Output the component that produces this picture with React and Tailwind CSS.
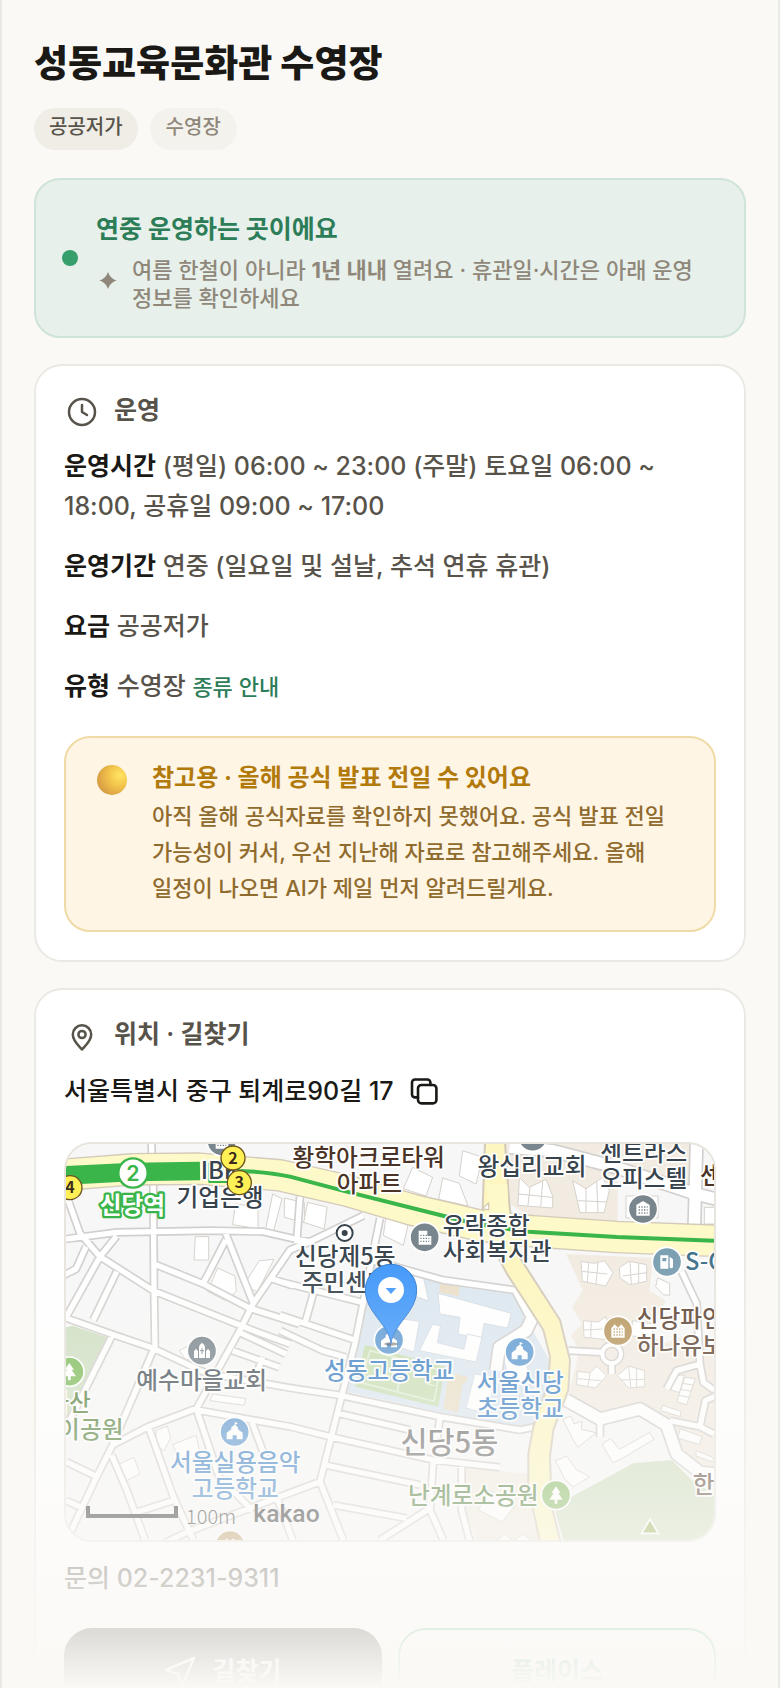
import React, { useState } from "react";
import { clsx } from "clsx";

const minorRoads = [
  "M256 -10L262 138L264 428L267 613",
  "M0 285L152 265L432 260L592 263L700 288L732 293L892 215",
  "M0 150L42 268L102 338L262 440L552 556L672 600",
  "M152 276L102 338L0 520",
  "M60 308L30 375L-10 395",
  "M270 362L412 420L552 493L700 540",
  "M479 268L562 478M479 288L412 418",
  "M732 293L672 318L562 478L522 558L392 793L247 848L140 903L92 998L12 1168",
  "M0 522L142 572L262 613L422 688L680 733L817 753L1122 818L1362 858L1420 846",
  "M152 383L82 528",
  "M137 578L2 848",
  "M262 618L140 900",
  "M392 798L672 848L792 878L1102 948L1302 970",
  "M942 223L867 598L762 1013L832 1188",
  "M762 1013L642 1058L362 1165L300 1195",
  "M777 963L1062 1023",
  "M1102 948L1092 1098L1132 1188",
  "M1187 968L1187 1098L1212 1195",
  "M802 1083L1022 1123M1092 1093L942 1188",
  "M817 808L1032 858M1122 818L1114 880",
  "M247 848L322 1058L382 1188",
  "M392 798L460 1000L560 1100",
  "M137 933L182 1038L237 1188",
  "M202 1108L327 1068M0 953L92 998M0 1070L50 1092",
  "M557 833L612 978M632 1058L680 1188",
  "M702 158L692 298",
  "M922 350L1130 408L1357 440",
  "M642 413L900 478M620 405L680 425M642 513L872 590M742 448L717 538",
  "M520 565L660 630M500 620L640 670M590 640L572 690",
  "M642 560L770 620L840 640",
  "M1847 383L1892 478L1902 660L1912 715L1944 738",
  "M1902 660L1832 680L1802 735",
  "M1812 830L1902 848L1918 770L1950 755M1902 848L1944 870",
  "M1507 620L1607 625M1637 655L1637 690M1602 830L1602 880",
];

const wideRoads = [
  "M1892 -10L1885 250",
  "M1330 10L1460 20L1650 70L1890 150L1950 165",
  "M1500 768L1602 825L1722 795L1802 843L1832 930L1902 985L1954 990",
  "M1357 440L1400 520L1380 560L1300 610L1290 680",
];

const buildings = [
  "M388 278h40v70h-44z",
  "M455 372l52 24l4 46l-32 28l-54-28z",
  "M580 350l44-4l-50 98l-40-22z",
  "M508 180l68 8v66l-76-12z",
  "M620 150l-22 110l24 4l26-100z",
  "M655 162l60 14v60l-60-16z",
  "M725 175l58 14l-8 66l-62-20z",
  "M1040 70l60 30l-20 56l-68-22z",
  "M1130 102l50 16l26 68l-88-20z",
  "M1190 20l60 20l-20 80l-50-24z",
  "M960 218l66 26l-14 60l-60-30z",
  "M1360 100l30 30l50-24l20 50v36l-104-8zM1358 150l100 10M1392 130l-6 54M1430 112l-6 76",
  "M1520 110l40 24l50-34l20 40l-16 66h-72zM1536 170l88 4M1560 134v70M1592 112l4 94",
  "M1680 156h40v66h-40zM1740 156h36v66h-36z",
  "M1915 190h40v50h-40z",
  "M1545 352l40 6l30-8l26 36l-22 40l-70-14zM1548 382l76 8M1568 356l-4 58M1596 356l-6 64",
  "M1660 370l30-18l52 10v50l-50 10l-30-20zM1670 396l72-10M1692 354l4 66M1718 358v58",
  "M1775 402l36 16v36l-20-2l-22-24z",
  "M1552 530l46 4l20-16l20 40l-24 28l-60-6zM1552 558l80-4M1576 532l-2 50",
  "M1700 530l60 10v40l-66-4z",
  "M1534 682l38 4l20-20l30 30l-34 36l-56-10zM1534 704l72 6M1572 686l-6 42",
  "M1654 694l34-28l48 14v48l-48 4zM1664 708l72-2M1688 668l6 62M1712 674v56",
  "M1820 698l36-6l-16 54l-30-10z",
  "M1856 700l32 4l-26 78l-30-8zM1850 718l34 6M1844 736l34 6M1838 754l34 6",
  "M1790 784l54 18v16l-60-18z",
  "M1842 854l66 24l-8 24l-64-20zM1890 920l50 20l6 16l-56-20z",
  "M1490 826l24-10l10 24l24-8l-2 24l44 10l-54 44l-16-26z",
  "M1608 900l26-16l26 32l90-50l14 20l-100 60l-24 10z",
  "M1468 950l34-14l30 42l40 20l-50 30l-24-20z",
  "M1238 1098l30-60l40 20l20-24l20 50l-40 50z",
  "M1290 1190l26-20l24 20zM1345 1190l26-20l24 20z",
  "M270 860l34-14l10 36l-20 38l-24-16z",
  "M320 902l70-28l14 60l-60 24z",
  "M160 960l44-20l18 50l-44 22z",
  "M440 750l100 14l-6 20l-102-14z",
  "M340 620l30-16l20 34l-30 10z",
];

const schoolBuildings = [
  "M1020 375l50 16l18 80l-66-24z",
  "M975 520l85 12l-16 92l-80-26z",
  "M1116 448l220 60l-12 44l-70-14l-8 46l-70-14l6-50l-60-10z",
  "M1100 540l24 6l-10 50l80 20l10-46l44 10l-18 74l-170-34z",
  "M1226 690l60 10l-20 110l-66-18z",
  "M1310 640l70 20l20 60l-60 6z",
];

const labels = [
  { x: 908, y: 67, text: "황학아크로타워", fill: "#4a3327" },
  { x: 910, y: 145, text: "아파트", fill: "#4a3327" },
  { x: 1398, y: 92, text: "왕십리교회", fill: "#37444d" },
  { x: 1733, y: 52, text: "센트라스", fill: "#37444d" },
  { x: 1733, y: 129, text: "오피스텔", fill: "#37444d" },
  { x: 1902, y: 119, text: "센트라스", fill: "#4a3327", anchor: "start" },
  { x: 1130, y: 269, text: "유락종합", fill: "#37444d", anchor: "start" },
  { x: 1130, y: 348, text: "사회복지관", fill: "#37444d", anchor: "start" },
  { x: 838, y: 362, text: "신당제5동", fill: "#37444d" },
  { x: 838, y: 442, text: "주민센터", fill: "#37444d" },
  { x: 404, y: 105, text: "IBK", fill: "#37444d", anchor: "start" },
  { x: 462, y: 185, text: "기업은행", fill: "#37444d" },
  { x: 1857, y: 379, text: "S-OIL", fill: "#3f7189", anchor: "start" },
  { x: 1712, y: 549, text: "신당파인힐", fill: "#5c4434", anchor: "start" },
  { x: 1712, y: 629, text: "하나유보라", fill: "#5c4434", anchor: "start" },
  { x: 407, y: 735, text: "예수마을교회", fill: "#46525a" },
  { x: 9, y: 802, text: "다산", fill: "#56813e" },
  { x: 9, y: 882, text: "어린이공원", fill: "#56813e" },
  { x: 970, y: 704, text: "성동고등학교", fill: "#3a7fc4" },
  { x: 1363, y: 740, text: "서울신당", fill: "#3a7fc4" },
  { x: 1363, y: 820, text: "초등학교", fill: "#3a7fc4" },
  { x: 508, y: 982, text: "서울실용음악", fill: "#3a7fc4" },
  { x: 508, y: 1059, text: "고등학교", fill: "#3a7fc4" },
  { x: 1222, y: 1080, text: "난계로소공원", fill: "#4a7a35" },
  { x: 1880, y: 1047, text: "한진", fill: "#5a4536", anchor: "start" },
];

const exits = [
  { x: 12, y: 131, n: 4 },
  { x: 520, y: 116, n: 3 },
  { x: 501, y: 42, n: 2 },
];

const glyphs = {
  church: "M-24 22V2l6-8l6 8v20zM-9 22V-10q0-8 9-14q9 6 9 14v32zM12 22V2l6-8l6 8v20z",
  school: "M-24 22V2l14-10V-14L0-22V-30l10 4l-8 5L10-14V-8L24 2v20H6V10h-12v12z",
  tree: "M0-26l14 20h-7l13 20H4v12h-8v-12h-16l13-20h-7z",
  office: "M-20 20V-12L0-24l20 12v32z",
  building: "M-18 22v-42h26v16h12v26z",
  gas: "M-20 20v-40h24v40zM8-16l10 8v22a5 5 0 0 1-10 0V2",
  apartment: "M-20 20V-8l10-12l10 10l10-10l10 12v28z",
};

const Poi = ({ x, y, kind, color }) => (
  <g transform={`translate(${x} ${y})`}>
    <circle r="44" fill={color} stroke="#fff" strokeWidth="5" />
    <path d={glyphs[kind]} fill="#fff" />
    {kind === "church" && <path d="M0-8v18M-6 0h12" stroke={color} strokeWidth="3" />}
    {kind === "gas" && <path d="M-14-12h12v10h-12z" fill={color} />}
    {["office", "building", "apartment"].includes(kind) && (
      <path d="M-13-6H14M-13 3H14M-13 12H14" stroke={color} strokeWidth="4" strokeDasharray="4 4" />
    )}
  </g>
);

const LocationMap = () => (
  <svg viewBox="0 0 1944 1188" className="block w-full" role="img" aria-label="지도">
    <rect width="1944" height="1188" fill="#f7f7f7" />
    {/* districts, school grounds and parks */}
    <g>
      <path d="M1318 0H1870V120L1655 90V238L1400 222L1330 180z" fill="#f2ebe1" />
      <path d="M1656 90L1860 150V240H1656z" fill="#f7f7f7" />
      <path d="M1500 330L1762 342L1750 440L1800 470L1750 560L1790 600L1890 560L1944 650V980L1860 930L1810 838L1722 785L1602 815L1507 758L1540 620L1515 575L1548 540L1518 490L1550 438z" fill="#f2ebe1" />
      <path d="M1200 972L1395 990L1422 1188H1232L1195 1100z" fill="#f2ebe1" />
      <path d="M905 358L1357 448L1400 560L1452 650L1440 740L1400 845L1340 850L1122 805L830 740z" fill="#dce7f0" />
      <path d="M897 603L1137 668L1117 788L867 728z" fill="#c9dfb4" />
      <path d="M912 620L1122 678L1104 772L884 716zM1010 648L994 744M1092 670l-8 50l24 6" fill="none" stroke="#e3eed8" strokeWidth="5" />
      <path d="M1146 700L1192 708L1176 806L1132 794zM1168 690l36 8l-4 20l-36-8zM1122 411l60 12l-4 34l-58-12z" fill="#eadfc8" />
      <path d="M0 550L20 545L122 580L0 830z" fill="#cfdfc2" />
      <path d="M1467 1098L1517 1058L1702 958L1817 948L1880 1010L1944 1050V1188H1492z" fill="#cfdebf" />
    </g>
    <g fill="#fff">
      {schoolBuildings.map((d) => (
        <path key={d} d={d} stroke="#d5dde4" strokeWidth="3" />
      ))}
      {buildings.map((d) => (
        <path key={d} d={d} stroke="#d6d2cc" strokeWidth="3" />
      ))}
    </g>
    <g fill="none" strokeLinejoin="round">
      <path d={minorRoads.join("")} stroke="#d2d0ce" strokeWidth="26" />
      <path d={wideRoads.join("")} stroke="#d2d0ce" strokeWidth="44" />
      <circle cx="1637" cy="630" r="28" stroke="#d2d0ce" strokeWidth="20" />
      <path d={minorRoads.join("")} stroke="#fff" strokeWidth="16" />
      <path d={wideRoads.join("")} stroke="#fff" strokeWidth="34" />
      <circle cx="1637" cy="630" r="28" stroke="#fff" strokeWidth="12" />
    </g>
    {/* arterial roads */}
    <g fill="none" strokeLinejoin="round">
      <path d="M0 92L200 76L400 74L642 94L842 140L1042 198L1242 245L1402 262L1652 279L1944 290" stroke="#d3cab9" strokeWidth="98" />
      <path
        d="M1257 -5H1317L1330 180L1347 318L1482 528L1512 648L1507 738L1462 858L1452 938L1457 1088L1484 1195H1422L1387 1028V928L1402 848L1447 718L1452 638L1432 558L1322 388L1270 290L1250 190z"
        fill="#fdf6c0"
        stroke="#d3cab9"
        strokeWidth="6"
      />
      <path d="M0 92L200 76L400 74L642 94L842 140L1042 198L1242 245L1402 262L1652 279L1944 290" stroke="#fef9c8" strokeWidth="90" />
      <path d="M1262 120H1324L1332 330L1290 310z" fill="#fef9c8" />
      <path d="M1248 195l20-18v20z" fill="#fff" stroke="#d3cab9" strokeWidth="4" />
      <path d="M0 94L200 84L402 81" stroke="#39b54a" strokeWidth="56" />
      <path d="M430 58h70v56h-70z" stroke="#39b54a" strokeWidth="6" />
      <path d="M500 80Q600 82 672 98L842 143L1122 213Q1240 246 1387 263L1652 279L1944 290" stroke="#39b54a" strokeWidth="12" />
    </g>

    <Poi x={467} y={-8} kind="building" color="#7a868d" />
    <Poi x={1400} y={-22} kind="church" color="#7a868d" />
    <Poi x={1076} y={280} kind="building" color="#7a868d" />
    <Poi x={1731} y={195} kind="office" color="#7a868d" />
    <Poi x={1803} y={354} kind="gas" color="#7a9fb1" />
    <Poi x={1656} y={561} kind="apartment" color="#b8965f" />
    <Poi x={408} y={620} kind="church" color="#7a868d" />
    <Poi x={969} y={588} kind="school" color="#5f9bd2" />
    <Poi x={1361} y={624} kind="school" color="#5f9bd2" />
    <Poi x={506} y={864} kind="school" color="#5b96d0" />
    <Poi x={10} y={683} kind="tree" color="#7dbb59" />
    <Poi x={1470} y={1053} kind="tree" color="#84b860" />
    <Poi x={492} y={1203} kind="apartment" color="#b8965f" />
    <path d="M1752 1126l25 42h-50z" fill="#8fae4c" stroke="#fff" strokeWidth="5" />
    <circle cx="836" cy="267" r="24" fill="#fff" stroke="#37444d" strokeWidth="6" />
    <circle cx="836" cy="267" r="9" fill="#37444d" />

    <g
      className="font-['Noto_Sans_CJK_KR',sans-serif] text-[71px] font-medium"
      stroke="#fff"
      strokeWidth="10"
      strokeLinejoin="round"
      paintOrder="stroke"
    >
      {labels.map((l) => (
        <text key={`${l.x}-${l.y}`} x={l.x} y={l.y} fill={l.fill} textAnchor={l.anchor || "middle"}>
          {l.text}
        </text>
      ))}
      <text x="1150" y="928" fill="#6c6c6c" textAnchor="middle" className="text-[88px]">
        신당5동
      </text>
      <text x="199" y="210" fill="#fff" stroke="#39b54a" strokeWidth="14" textAnchor="middle" className="text-[71px] font-bold">
        신당역
      </text>
    </g>

    <circle cx="201" cy="87" r="44" fill="#fff" stroke="#39b54a" strokeWidth="7" />
    <text x="201" y="110" textAnchor="middle" fill="#39b54a" className="font-['Inter',sans-serif] text-[64px] font-semibold">
      2
    </text>
    {exits.map((e) => (
      <g key={e.n}>
        <circle cx={e.x} cy={e.y} r="36" fill="#fff155" stroke="#6b5420" strokeWidth="4" />
        <text x={e.x} y={e.y + 17} textAnchor="middle" fill="#3c2c1c" className="font-['Noto_Sans_CJK_KR',sans-serif] text-[48px] font-bold">
          {e.n}
        </text>
      </g>
    ))}

    {/* place marker */}
    <ellipse cx="975" cy="600" rx="20" ry="5" fill="#333" opacity=".5" />
    <path
      d="M975 598C968 540 898 505 898 438A77 77 0 0 1 1052 438C1052 505 982 540 975 598z"
      fill="#3f97fa"
      stroke="#2f78cf"
      strokeWidth="3"
    />
    <circle cx="975" cy="438" r="39" fill="#fff" />
    <path d="M959 432h32l-16 18z" fill="#3f97fa" />

    <path d="M66 1086v30h264v-30" fill="none" stroke="#222" strokeWidth="12" />
    <text x="360" y="1140" fill="#222" className="font-['Noto_Sans_CJK_KR',sans-serif] text-[60px] font-light">
      100m
    </text>
    <text x="562" y="1134" fill="#222" className="font-['Roboto',sans-serif] text-[74px]">
      kakao
    </text>
  </svg>
);

const ClockIcon = () => (
  <svg viewBox="0 0 36 36" className="size-9 shrink-0" fill="none" stroke="currentColor" strokeWidth="2.5" strokeLinecap="round" strokeLinejoin="round" aria-hidden="true">
    <circle cx="18" cy="18" r="13" />
    <path d="M18 11v7l5 3" />
  </svg>
);

const PinIcon = () => (
  <svg viewBox="0 0 36 36" className="size-9 shrink-0" fill="none" stroke="currentColor" strokeWidth="2.5" strokeLinejoin="round" aria-hidden="true">
    <path d="M18 31.5C15 28 8.800 23 8.800 16.500a9.200 9.200 0 0 1 18.400 0C27.200 23 21 28 18 31.500z" />
    <circle cx="18" cy="16.5" r="3.6" />
  </svg>
);

const CopyIcon = () => (
  <svg viewBox="0 0 28 28" className="size-7" fill="none" stroke="currentColor" strokeWidth="2.6" strokeLinecap="round" strokeLinejoin="round" aria-hidden="true">
    <rect x="8" y="7" width="18.4" height="18.4" rx="3.5" />
    <path d="M8 19.400H5A3 3 0 0 1 2 16.400V4.500A3 3 0 0 1 5 1.500H17.400A3 3 0 0 1 20.400 4.500V7" />
  </svg>
);

const Card = ({ icon, title, children }) => (
  <section className="mt-[26px] rounded-[28px] border-2 border-[#ebe9e3] bg-white p-7">
    <h2 className="mb-4 flex h-9 gap-3.5 text-[25px] leading-8 font-semibold">
      {icon}
      {title}
    </h2>
    {children}
  </section>
);

const Row = ({ label, children }) => (
  <div>
    <dt className="inline font-bold text-[#1a1916]">{label}</dt>{" "}
    <dd className="inline">{children}</dd>
  </div>
);

const App = () => {
  const [copied, setCopied] = useState(false);
  const address = "서울특별시 중구 퇴계로90길 17";

  const copyAddress = () => {
    navigator.clipboard?.writeText(address);
    setCopied(true);
  };

  return (
    <div className="relative h-screen overflow-hidden border-x-2 border-[#ebe9e3] bg-[#faf9f6] px-8 pt-10 font-['Inter','Noto_Sans_CJK_KR',sans-serif] font-medium break-keep text-[#57534a]">
      <h1 className="text-[37px] leading-[48px] font-extrabold text-[#1a1916]">성동교육문화관 수영장</h1>
      <ul className="mt-5 flex gap-3 text-[20px] leading-[38px] font-medium">
        <li className="h-[42px] rounded-full bg-[#f0ede6] px-[15px]">공공저가</li>
        <li className="h-[42px] rounded-full bg-[#f4f2ed] px-4 text-[#8f887a]">수영장</li>
      </ul>

      <section className="mt-7 flex items-center gap-[18px] rounded-[26px] border-2 border-[#cfe4d8] bg-[#e8f0eb] px-[26px] py-6">
        <span className="size-4 shrink-0 rounded-full bg-[#379f6c]" />
        <div>
          <h2 className="text-[25px] leading-[50px] font-bold text-[#2c7d58]">연중 운영하는 곳이에요</h2>
          <div className="mt-0.5 flex items-center gap-3 text-[#8f887a]">
            <svg viewBox="0 0 24 24" className="size-6 shrink-0" fill="currentColor" aria-hidden="true">
              <path d="M12 0Q14 6.400 20.500 8.500Q14 10.600 12 17Q10 10.600 3.500 8.500Q10 6.400 12 0z" />
            </svg>
            <p className="text-[22px] leading-7">
              여름 한철이 아니라 <strong className="font-bold">1년 내내</strong> 열려요 · 휴관일·시간은 아래 운영 정보를 확인하세요
            </p>
          </div>
        </div>
      </section>

      <Card icon={<ClockIcon />} title="운영">
        <dl className="flex flex-col gap-5 text-[25px] leading-10">
          <Row label="운영시간">(평일) 06:00 ~ 23:00 (주말) 토요일 06:00 ~ 18:00, 공휴일 09:00 ~ 17:00</Row>
          <Row label="운영기간">연중 (일요일 및 설날, 추석 연휴 휴관)</Row>
          <Row label="요금">공공저가</Row>
          <Row label="유형">
            수영장{" "}
            <a href="#types" className="text-[22px] leading-none text-[#2c7d58]">
              종류 안내
            </a>
          </Row>
        </dl>
        <div className="mt-[30px] flex gap-[22px] rounded-[26px] border-2 border-[#f0dba6] bg-[#fff5e5] px-7 py-6">
          <span className="flex size-9 shrink-0 items-center justify-center">
            <span className="size-[30px] rounded-full bg-[radial-gradient(circle_at_75%_35%,#ffe564_0%,#f3c54c_35%,#dba344_70%,#d08a55_100%)]" />
          </span>
          <div>
            <h3 className="mb-1 text-[24px] leading-8 font-bold text-[#b27a0b]">참고용 · 올해 공식 발표 전일 수 있어요</h3>
            <p className="text-[22px] leading-9 text-[#8f6b2e]">
              아직 올해 공식자료를 확인하지 못했어요. 공식 발표 전일 가능성이 커서, 우선 지난해 자료로 참고해주세요. 올해 일정이 나오면 AI가 제일 먼저 알려드릴게요.
            </p>
          </div>
        </div>
      </Card>

      <Card icon={<PinIcon />} title="위치 · 길찾기">
        <div className="flex h-11 items-center gap-4 text-[25px] text-[#1a1916]">
          <address className="not-italic">{address}</address>
          <button type="button" onClick={copyAddress} aria-label="주소 복사" className={clsx("cursor-pointer", copied && "text-[#2c7d58]")}>
            <CopyIcon />
          </button>
        </div>
        <div className="mt-7 overflow-hidden rounded-[28px] border-2 border-[#e8e5de]">
          <LocationMap />
        </div>
        <p className="mt-4 text-[25px] leading-10">문의 02-2231-9311</p>
        <div className="mt-[30px] grid grid-cols-2 gap-4 text-[25px] font-bold">
          <button type="button" className="flex h-[88px] items-center justify-center gap-4 rounded-[28px] bg-[#1a1916] text-white">
            <svg viewBox="0 0 32 32" className="size-8" fill="none" stroke="currentColor" strokeWidth="2.5" strokeLinejoin="round" aria-hidden="true">
              <path d="M30 2L18 30L14 18L2 14z" />
            </svg>
            길찾기
          </button>
          <button type="button" className="h-[88px] rounded-[28px] border-2 border-[#57b083] bg-white text-[#2c7d58]">
            플레이스
          </button>
        </div>
      </Card>

      <div className="pointer-events-none absolute inset-x-0 bottom-0 h-[440px] bg-linear-to-b from-[#faf9f6]/0 to-[#faf9f6]" />
    </div>
  );
};

export default App;
